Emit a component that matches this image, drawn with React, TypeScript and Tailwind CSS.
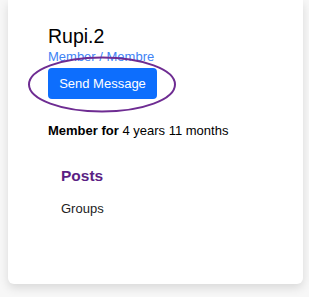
export default function App() {
  return (
    <div className="min-h-[297px] w-[309px] bg-[#f7f7f7] font-['Liberation_Sans',Arial,sans-serif] text-[#111]">
      <div className="ml-2 h-[284px] w-[295px] rounded-b-md bg-white pl-10 pt-[25px] shadow-[0_4px_10px_rgba(0,0,0,0.12)]">
        <h4 className="text-[19.5px] leading-[22px] text-black">Rupi.2</h4>
        <a href="#" className="block text-[13px] leading-[19.5px] text-[#3f83f5]">
          Member / Membre
        </a>
        <div className="relative mt-[1.5px] w-[109px]">
          <button
            type="button"
            className="flex h-[31px] w-[109px] items-center justify-center rounded-[4px] bg-[#0d6efd] text-[13px] text-white"
          >
            Send Message
          </button>
          {/* annotation ring drawn over the button */}
          <svg
            className="pointer-events-none absolute left-[-21px] top-[-12px]"
            width="150"
            height="57"
            viewBox="0 0 150 57"
          >
            <ellipse cx="75" cy="28.5" rx="73" ry="27" fill="none" stroke="#6e2c92" strokeWidth="2" />
          </svg>
        </div>
        <p className="mt-[21.5px] text-[13px] leading-[19.5px] text-black">
          <span className="font-bold">Member for</span> 4 years 11 months
        </p>
        <div className="pl-[13px]">
          <h5 className="mt-[27px] text-[15.5px] font-bold leading-[18.6px] text-[#5b1f84]">Posts</h5>
          <p className="mt-[13px] text-[13px] leading-[19.5px] text-[#222]">Groups</p>
        </div>
      </div>
    </div>
  );
}
